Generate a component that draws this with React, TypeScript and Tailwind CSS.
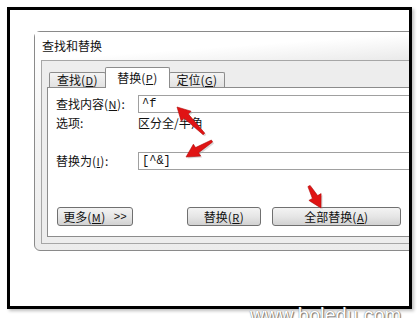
import * as React from 'react';

const CJK = { fontFamily: '"Noto Sans CJK SC", "Liberation Sans", sans-serif' };

// tapered red arrow from tail (x1,y1) to tip (x2,y2)
function arrowPoints(x1: number, y1: number, x2: number, y2: number) {
    const dx = x2 - x1;
    const dy = y2 - y1;
    const len = Math.hypot(dx, dy);
    const ux = dx / len;
    const uy = dy / len;
    const nx = -uy;
    const ny = ux;
    const headLen = Math.min(13, len * 0.5);
    const bx = x2 - ux * headLen;
    const by = y2 - uy * headLen;
    const pts = [
        [x1 + nx * 1.2, y1 + ny * 1.2],
        [bx + nx * 3, by + ny * 3],
        [bx + nx * 7, by + ny * 7],
        [x2, y2],
        [bx - nx * 7, by - ny * 7],
        [bx - nx * 3, by - ny * 3],
        [x1 - nx * 1.2, y1 - ny * 1.2],
    ];
    return pts.map(p => `${p[0].toFixed(1)},${p[1].toFixed(1)}`).join(' ');
}

const Arrow: React.FC<{ x1: number; y1: number; x2: number; y2: number }> = ({ x1, y1, x2, y2 }) => (
    <g>
        <polygon points={arrowPoints(x1 + 1.5, y1 + 1.5, x2 + 1.5, y2 + 1.5)} fill="#9a9a9a" opacity="0.35" />
        <polygon points={arrowPoints(x1, y1, x2, y2)} fill="#e01414" stroke="#b00808" strokeWidth="0.6" />
    </g>
);

const Key: React.FC<{ k: string }> = ({ k }) => (
    <span className="text-[12px] tracking-[0.5px]">
        (<span className="underline text-[11px]">{k}</span>)
    </span>
);

const Tab: React.FC<{ label: string; k: string; active?: boolean; width: string }> = ({ label, k, active, width }) =>
    active ? (
        <div className={`${width} h-[21px] -mb-px -mx-px z-10 bg-white border border-b-0 border-[#8c8c8c] rounded-t-[2px] flex items-center justify-center text-[12px] text-[#111]`}>
            {label}
            <Key k={k} />
        </div>
    ) : (
        <div className={`${width} h-[15px] bg-gradient-to-b from-[#f4f4f4] to-[#e2e2e2] border border-b-0 border-[#8c8c8c] rounded-t-[2px] flex items-center justify-center text-[12px] text-[#111]`}>
            {label}
            <Key k={k} />
        </div>
    );

const Button: React.FC<{ width: string; children: React.ReactNode }> = ({ width, children }) => (
    <div className={`${width} h-[19px] rounded-[3px] border border-[#707070] bg-gradient-to-b from-[#f3f3f3] via-[#e6e6e6] to-[#d2d2d2] flex items-center justify-center text-[12px] text-[#111]`}>
        {children}
    </div>
);

export default function App() {
    return (
        <div className="relative w-[418px] h-[318px] bg-white overflow-hidden" style={CJK}>
            <div className="pt-[7px] pl-[7px]">
                <div className="w-[405px] h-[302px] border-[3px] border-black bg-white overflow-hidden shadow-[2px_2px_3px_rgba(0,0,0,0.25)]">
                    <div className="ml-[24px] mt-[21px] w-[400px] h-[220px] border border-[#8a8a8a] rounded-l-[6px] bg-gradient-to-b from-white via-[#f3f3f3] to-[#ececec] flex flex-col">
                        <div className="h-[28px] pl-[7px] flex items-center text-[12px] text-[#111] bg-gradient-to-br from-white via-white to-[#e8e8e8]">
                            查找和替换
                        </div>
                        <div className="ml-[6px] border border-[#a6a6a6] bg-[#ededed] flex flex-col pl-[5px] pb-[6px]">
                            <div className="h-[26px] flex items-end pl-[2px]">
                                <Tab label="查找" k="D" width="w-[57px]" />
                                <Tab label="替换" k="P" width="w-[65px]" active />
                                <Tab label="定位" k="G" width="w-[56px]" />
                            </div>
                            <div className="h-[150px] bg-white border border-[#8c8c8c] border-r-0 flex flex-col pl-[8px] text-[12px] text-[#111]">
                                <div className="mt-[7px] flex items-center h-[18px]">
                                    <div className="w-[82px]">查找内容<Key k="N" />:</div>
                                    <div className="flex-1 h-[18px] border border-[#a0a0a0] border-r-0 flex items-center pl-[3px] font-['Liberation_Mono',monospace] text-[12px]">^f</div>
                                </div>
                                <div className="mt-[3px] flex items-center h-[14px]">
                                    <div className="w-[82px]">选项:</div>
                                    <div>区分全/半角</div>
                                </div>
                                <div className="mt-[22px] flex items-center h-[18px]">
                                    <div className="w-[82px]">替换为<Key k="I" />:</div>
                                    <div className="flex-1 h-[18px] border border-[#a0a0a0] border-r-0 flex items-center pl-[3px] font-['Liberation_Mono',monospace] text-[12px]">[^&amp;]</div>
                                </div>
                                <div className="mt-[37px] flex items-center pl-[1px]">
                                    <Button width="w-[76px]">
                                        <span>更多<Key k="M" /></span>
                                        <span className="ml-[8px] text-[11px] font-['Liberation_Sans',sans-serif]">&gt;&gt;</span>
                                    </Button>
                                    <div className="ml-[54px]">
                                        <Button width="w-[74px]">替换<Key k="R" /></Button>
                                    </div>
                                    <div className="ml-[11px]">
                                        <Button width="w-[129px]">全部替换<Key k="A" /></Button>
                                    </div>
                                </div>
                            </div>
                        </div>
                    </div>
                </div>
            </div>

            <div className="absolute left-[250px] top-[305px] text-[20px] leading-[20px] text-white font-['Liberation_Sans',sans-serif] [text-shadow:0_0_1px_#555,1px_1px_1px_#777]">
                www.boledu.com
            </div>

            <svg className="absolute left-0 top-0 pointer-events-none" width="418" height="318" viewBox="0 0 418 318">
                <Arrow x1={204} y1={134} x2={177} y2={107} />
                <Arrow x1={212} y1={141} x2={186} y2={157} />
                <Arrow x1={309} y1={186} x2={321} y2={208} />
            </svg>
        </div>
    );
}
